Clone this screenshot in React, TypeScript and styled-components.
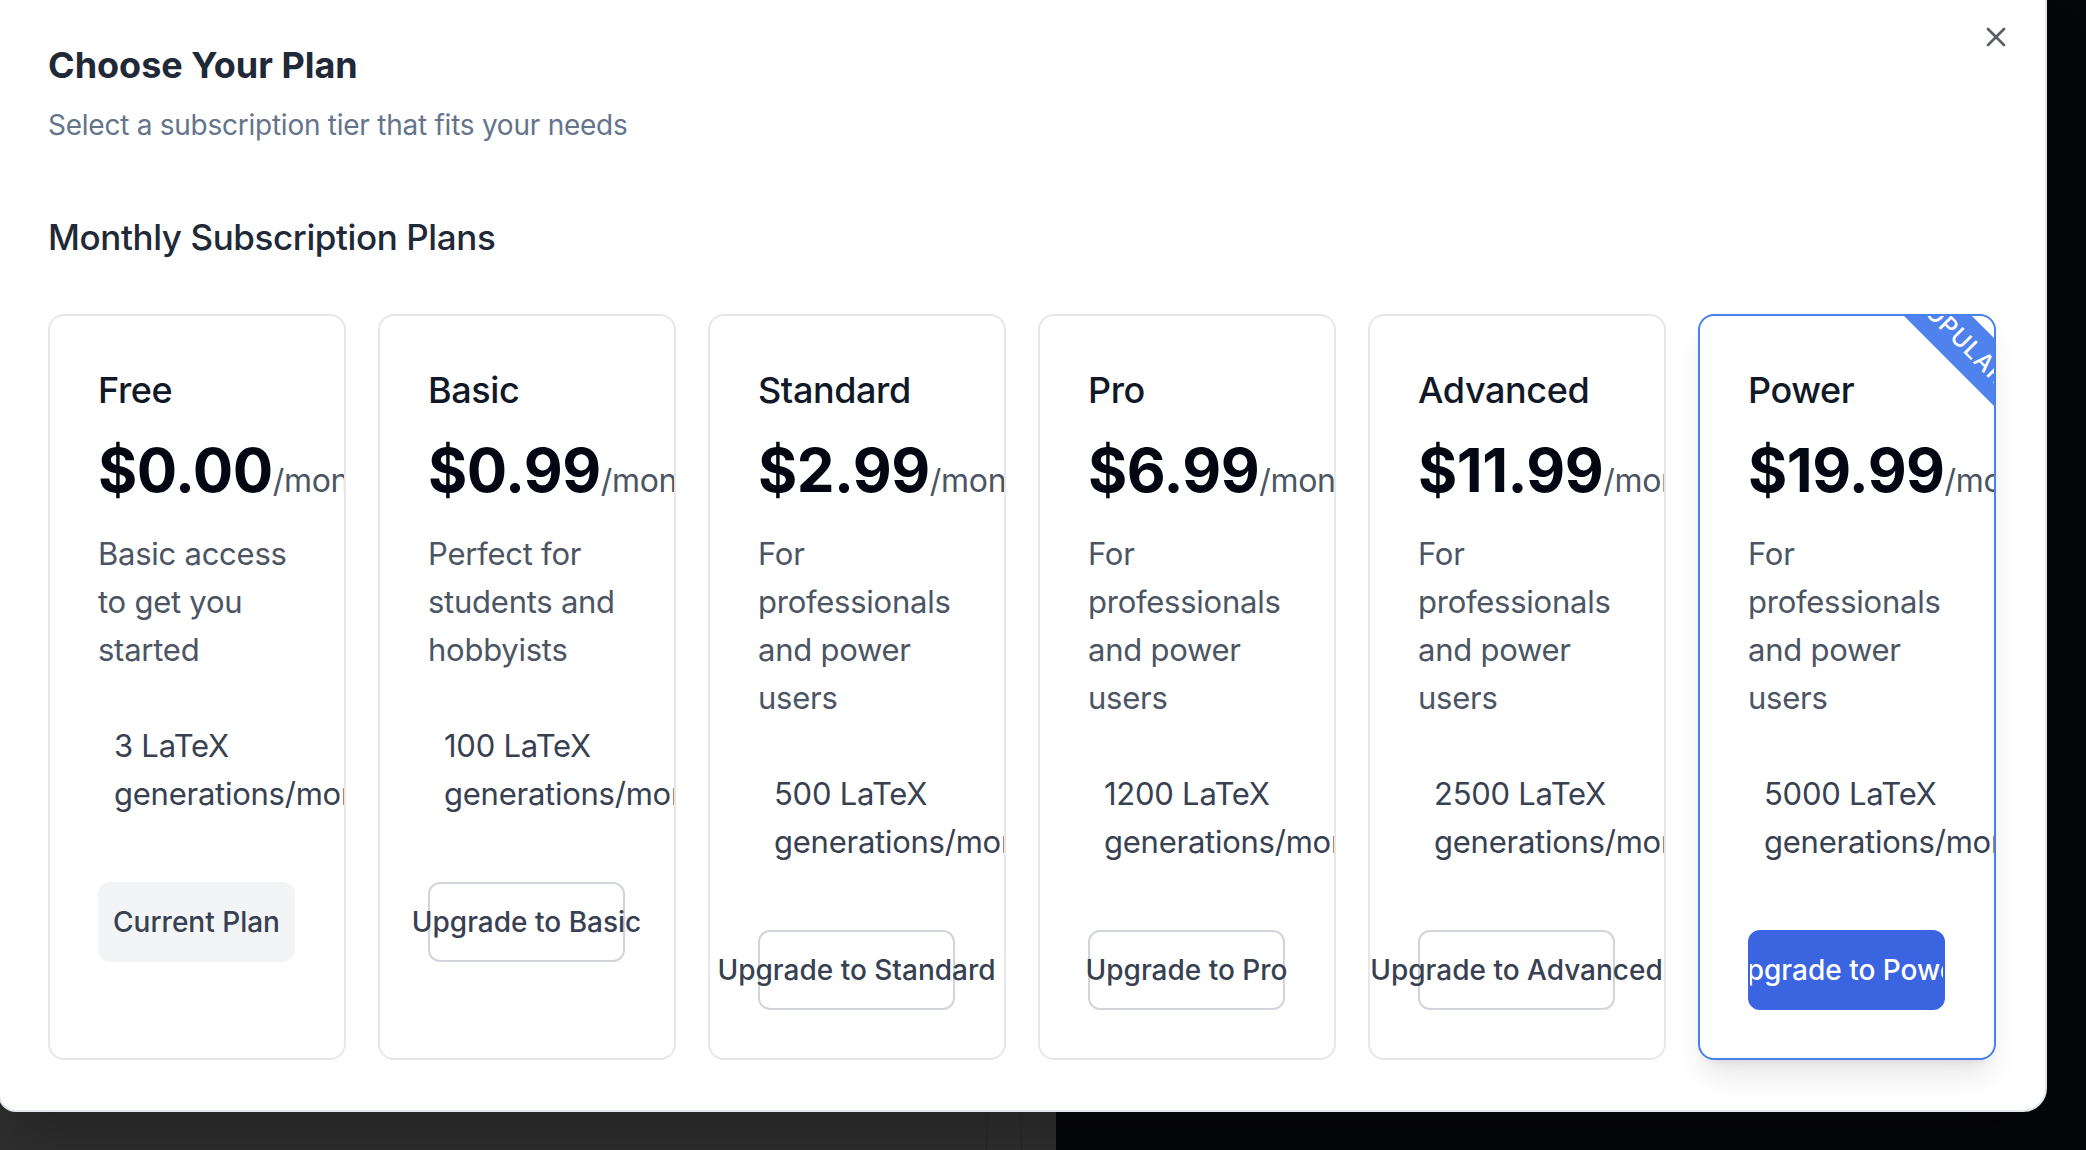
import React from 'react';
import styled, { createGlobalStyle } from 'styled-components';
import { X } from 'lucide-react';

const GlobalStyle = createGlobalStyle`
  * { box-sizing: border-box; }
  html, body {
    margin: 0;
    padding: 0;
    width: 100%;
    height: 100%;
    overflow: hidden;
    background: #05060a;
  }
  body {
    font-family: Inter, "Noto Sans", "Liberation Sans", sans-serif;
    -webkit-font-smoothing: antialiased;
  }
  #root { width: 100%; height: 100%; }
`;

const Screen = styled.div`
  position: relative;
  width: 2086px;
  height: 1150px;
  background: #05060a;
  overflow: hidden;
  display: flex;
`;

const AppPane = styled.div`
  width: 1056px;
  height: 100%;
  background: #303030;
  display: flex;
  justify-content: flex-end;
`;

const PaneColumn = styled.div`
  width: 35px;
  height: 100%;
  border-left: 1px solid #2a2a2a;
`;

const Dialog = styled.div`
  position: absolute;
  left: -2px;
  top: -2px;
  width: 2049px;
  height: 1114px;
  background: #ffffff;
  border: 2px solid #e2e5ea;
  border-radius: 0 0 24px 18px;
  padding: 37px 49px 0 48px;
  box-shadow: 0 40px 60px -10px rgba(0, 0, 0, 0.25);
`;

const CloseButton = styled.button`
  position: absolute;
  top: 21px;
  right: 33px;
  width: 32px;
  height: 32px;
  padding: 0;
  border: none;
  background: transparent;
  color: #5b5f6b;
  display: flex;
  align-items: center;
  justify-content: center;
  cursor: pointer;
`;

const Title = styled.h2`
  margin: 0;
  font-size: 36px;
  line-height: 56px;
  font-weight: 700;
  color: #1f2937;
  letter-spacing: 0;
`;

const Subtitle = styled.p`
  margin: 12px 0 0;
  font-size: 28px;
  line-height: 40px;
  color: #64748b;
  letter-spacing: -0.25px;
`;

const SectionHeading = styled.h3`
  margin: 64px 0 0;
  font-size: 35px;
  line-height: 56px;
  font-weight: 500;
  color: #1f2937;
  letter-spacing: -0.4px;
`;

const PlanGrid = styled.div`
  margin-top: 49px;
  display: grid;
  grid-template-columns: repeat(6, minmax(0, 1fr));
  gap: 32px;
`;

const Card = styled.div<{ $featured?: boolean }>`
  position: relative;
  overflow: hidden;
  border: 2px solid ${(p) => (p.$featured ? '#4a80ea' : '#e5e7eb')};
  border-radius: 16px;
  padding: 46px 48px 48px 48px;
  background: #ffffff;
  box-shadow: ${(p) =>
    p.$featured
      ? '0 20px 30px -6px rgba(0,0,0,0.10), 0 8px 12px -8px rgba(0,0,0,0.10)'
      : 'none'};
`;

const Ribbon = styled.div`
  position: absolute;
  top: -2px;
  right: -66px;
  width: 200px;
  height: 48px;
  transform: rotate(45deg);
  background: #4f82ec;
  color: #ffffff;
  font-size: 24px;
  line-height: 48px;
  font-weight: 500;
  letter-spacing: 1px;
  text-align: center;
`;

const PlanName = styled.div`
  font-size: 36px;
  line-height: 56px;
  font-weight: 500;
  color: #111827;
  letter-spacing: -0.4px;
`;

const PriceRow = styled.div`
  margin-top: 16px;
  display: flex;
  align-items: baseline;
  white-space: nowrap;
`;

const Price = styled.span`
  font-size: 60px;
  line-height: 72px;
  font-weight: 700;
  color: #030712;
  letter-spacing: -0.5px;
`;

const Period = styled.span`
  margin-left: 0;
  font-size: 32px;
  line-height: 48px;
  color: #4b5563;
  letter-spacing: -0.3px;
`;

const Description = styled.p`
  margin: 24px 0 0;
  font-size: 31px;
  line-height: 48px;
  color: #4b5563;
  letter-spacing: -0.25px;
`;

const FeatureList = styled.ul`
  margin: 48px 0 0;
  padding: 0 0 0 16px;
  list-style: none;
`;

const Feature = styled.li`
  font-size: 31px;
  line-height: 48px;
  color: #374151;
  letter-spacing: -0.25px;
`;

type Variant = 'current' | 'outline' | 'primary';

const PlanButton = styled.button<{ $variant: Variant }>`
  margin-top: 64px;
  width: 197px;
  height: 80px;
  padding: 0;
  border-radius: 12px;
  font-family: inherit;
  font-size: 28px;
  font-weight: 500;
  white-space: nowrap;
  display: flex;
  align-items: center;
  justify-content: center;
  cursor: pointer;
  border: 2px solid
    ${(p) =>
      p.$variant === 'outline'
        ? '#d1d5db'
        : p.$variant === 'primary'
        ? '#3b64e1'
        : '#f3f4f6'};
  background: ${(p) =>
    p.$variant === 'primary'
      ? '#3b64e1'
      : p.$variant === 'current'
      ? '#f3f4f6'
      : '#ffffff'};
  color: ${(p) => (p.$variant === 'primary' ? '#ffffff' : '#374151')};
  overflow: ${(p) => (p.$variant === 'primary' ? 'hidden' : 'visible')};
`;

type Plan = {
  name: string;
  price: string;
  description: string;
  feature: string;
  button: string;
  variant: Variant;
  popular?: boolean;
};

const plans: Plan[] = [
  {
    name: 'Free',
    price: '$0.00',
    description: 'Basic access to get you started',
    feature: '3 LaTeX generations/month',
    button: 'Current Plan',
    variant: 'current',
  },
  {
    name: 'Basic',
    price: '$0.99',
    description: 'Perfect for students and hobbyists',
    feature: '100 LaTeX generations/month',
    button: 'Upgrade to Basic',
    variant: 'outline',
  },
  {
    name: 'Standard',
    price: '$2.99',
    description: 'For professionals and power users',
    feature: '500 LaTeX generations/month',
    button: 'Upgrade to Standard',
    variant: 'outline',
  },
  {
    name: 'Pro',
    price: '$6.99',
    description: 'For professionals and power users',
    feature: '1200 LaTeX generations/month',
    button: 'Upgrade to Pro',
    variant: 'outline',
  },
  {
    name: 'Advanced',
    price: '$11.99',
    description: 'For professionals and power users',
    feature: '2500 LaTeX generations/month',
    button: 'Upgrade to Advanced',
    variant: 'outline',
  },
  {
    name: 'Power',
    price: '$19.99',
    description: 'For professionals and power users',
    feature: '5000 LaTeX generations/month',
    button: 'Upgrade to Power',
    variant: 'primary',
    popular: true,
  },
];

export default function App() {
  return (
    <>
      <GlobalStyle />
      <Screen>
        <AppPane>
          <PaneColumn />
          <PaneColumn />
        </AppPane>
        <Dialog role="dialog">
          <CloseButton aria-label="Close">
            <X size={32} strokeWidth={2} />
          </CloseButton>
          <Title>Choose Your Plan</Title>
          <Subtitle>Select a subscription tier that fits your needs</Subtitle>
          <SectionHeading>Monthly Subscription Plans</SectionHeading>
          <PlanGrid>
            {plans.map((plan) => (
              <Card key={plan.name} $featured={plan.popular}>
                {plan.popular && <Ribbon>POPULAR</Ribbon>}
                <PlanName>{plan.name}</PlanName>
                <PriceRow>
                  <Price>{plan.price}</Price>
                  <Period>/month</Period>
                </PriceRow>
                <Description>{plan.description}</Description>
                <FeatureList>
                  <Feature>{plan.feature}</Feature>
                </FeatureList>
                <PlanButton $variant={plan.variant}>{plan.button}</PlanButton>
              </Card>
            ))}
          </PlanGrid>
        </Dialog>
      </Screen>
    </>
  );
}
